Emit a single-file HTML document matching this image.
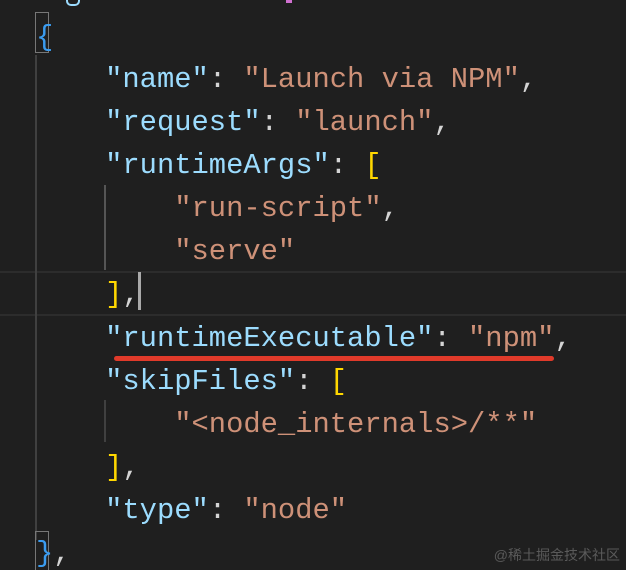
<!DOCTYPE html>
<html><head><meta charset="utf-8"><style>
html,body{margin:0;padding:0;background:#1f1f1f;width:626px;height:570px;overflow:hidden;position:relative}
.l{position:absolute;left:36px;white-space:pre;font-family:"Liberation Mono","DejaVu Sans Mono",monospace;font-size:28.8px;line-height:43px;height:43px;color:#d4d4d4}
.k{color:#9cdcfe}.s{color:#ce9178}.b{color:#3b9cf0}.y{color:#ffd700}
.g{position:absolute;width:2px;background:#404040}
</style></head><body>
<div style="position:absolute;left:0;right:0;top:271px;height:41px;border-top:2px solid #2c2c2c;border-bottom:2px solid #2c2c2c"></div>
<div class="g" style="left:35px;top:55px;height:485px"></div>
<div class="g" style="left:104px;top:185px;height:85px;background:#555"></div>
<div class="g" style="left:104px;top:400px;height:42px"></div>
<div style="position:absolute;left:35px;top:12px;width:14px;height:41px;border:1px solid #777;box-sizing:border-box"></div>
<div style="position:absolute;left:35px;top:531px;width:14px;height:40px;border:1px solid #777;box-sizing:border-box"></div>
<div style="position:absolute;left:286px;top:0;width:6px;height:3px;background:#d070d0"></div>
<div style="position:absolute;left:66px;top:0;width:10px;height:4px;border-radius:0 0 5px 5px;border:2px solid #9cdcfe;border-top:none"></div>
<div class="l" style="top:16px"><span class="b">{</span></div>
<div class="l" style="top:58px">    <span class="k">"name"</span>: <span class="s">"Launch via NPM"</span>,</div>
<div class="l" style="top:101px">    <span class="k">"request"</span>: <span class="s">"launch"</span>,</div>
<div class="l" style="top:144px">    <span class="k">"runtimeArgs"</span>: <span class="y">[</span></div>
<div class="l" style="top:187px">        <span class="s">"run-script"</span>,</div>
<div class="l" style="top:230px">        <span class="s">"serve"</span></div>
<div class="l" style="top:273px">    <span class="y">]</span>,</div>
<div style="position:absolute;left:138px;top:272px;width:3px;height:38px;background:#aaa"></div>
<div class="l" style="top:317px">    <span class="k">"runtimeExecutable"</span>: <span class="s">"npm"</span>,</div>
<div style="position:absolute;left:114px;top:356px;width:440px;height:5px;border-radius:3px;background:#e03a2a"></div>
<div class="l" style="top:360px">    <span class="k">"skipFiles"</span>: <span class="y">[</span></div>
<div class="l" style="top:403px">        <span class="s">"&lt;node_internals&gt;/**"</span></div>
<div class="l" style="top:446px">    <span class="y">]</span>,</div>
<div class="l" style="top:489px">    <span class="k">"type"</span>: <span class="s">"node"</span></div>
<div class="l" style="top:532px"><span class="b">}</span>,</div>
<div style="position:absolute;right:6px;top:545px;font-family:'Liberation Sans','Noto Sans CJK SC',sans-serif;font-size:14px;color:#5a5a5a">@稀土掘金技术社区</div>
</body></html>
